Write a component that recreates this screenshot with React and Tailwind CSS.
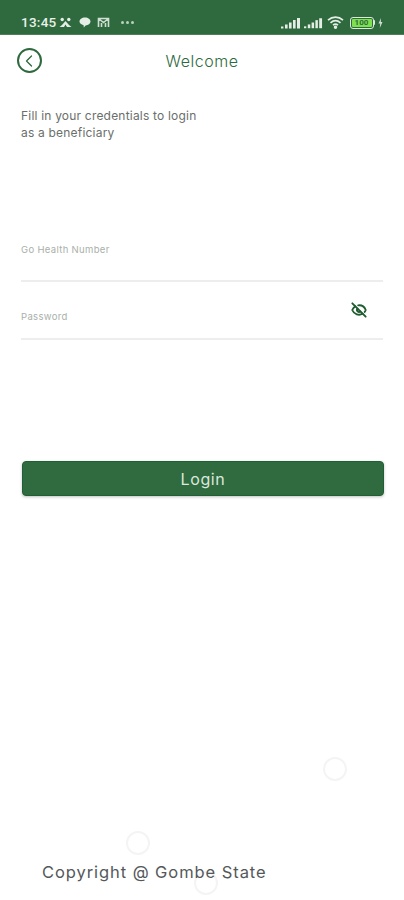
import React from 'react';
import { ChevronLeft, EyeOff } from 'lucide-react';

const font = "font-['Inter','Liberation_Sans',sans-serif]";

const SignalBars = ({ big }) => (
  <svg width={big ? 20 : 19} height="12" viewBox="0 0 20 12" fill="#e4eee6">
    <rect x="0" y="9.5" width="2.4" height="2" />
    <rect x="4" y="7.5" width="2.6" height="4" />
    <rect x="8" y="5.5" width="2.6" height="6" />
    <rect x="12" y="3" width="2.6" height="8.5" />
    <rect x="16" y="1" width="3" height="10.5" />
  </svg>
);

const Ring = ({ className }) => (
  <div className={`absolute w-6 h-6 rounded-full border-2 border-[#f3f4f3] ${className}`} />
);

const StatusBar = () => (
  <div className="h-[35px] bg-[#2f6a3e] flex items-center pl-[21px] pr-[21px] pt-[11px] shrink-0 border-b border-[#4d7f5a]">
    <span className="text-[13.5px] font-medium text-[#e8f1ea] font-['Roboto',sans-serif] tracking-[0.25px]">13:45</span>
    <svg className="ml-[2px]" width="13" height="11" viewBox="0 0 13 11" fill="#e4eee6">
      <circle cx="3.2" cy="2.5" r="1.7" />
      <circle cx="9.8" cy="2.5" r="1.7" />
      <path d="M6.5 4 L10 8 L12.5 10 L8 10 L6.5 7.5 L5 10 L0.5 10 L3 8 Z" />
    </svg>
    <svg className="ml-[7px]" width="12" height="11" viewBox="0 0 12 11" fill="#e4eee6">
      <path d="M6 0.5 C9.2 0.5 11.5 2.2 11.5 4.6 C11.5 7 9.2 8.4 6.6 8.4 L4.8 10.4 L4.6 8.2 C2.2 7.6 0.5 6.4 0.5 4.6 C0.5 2.2 2.8 0.5 6 0.5 Z" />
    </svg>
    <svg className="ml-[6px]" width="13" height="11" viewBox="0 0 13 11" fill="none" stroke="#cfdfd3" strokeWidth="1.6">
      <path d="M1.5 10 V1.5 H11.5 V10 M1.5 1.5 L6.5 5.5 L11.5 1.5 M4.5 10 V6 M8.5 10 V6" />
    </svg>
    <div className="ml-[11px] flex gap-[2px]">
      <div className="w-[3px] h-[3px] rounded-full bg-[#b9d0bf]" />
      <div className="w-[3px] h-[3px] rounded-full bg-[#b9d0bf]" />
      <div className="w-[3px] h-[3px] rounded-full bg-[#b9d0bf]" />
    </div>
    <div className="ml-auto flex items-center">
      <SignalBars big />
      <div className="ml-[3px]"><SignalBars /></div>
      <svg className="ml-[4px]" width="18" height="13" viewBox="0 0 18 13" fill="none" stroke="#e4eee6" strokeWidth="1.7">
        <path d="M1 4.2 C5.5 0.2 11.5 0.2 16 4.2" />
        <path d="M3.5 6.8 C6.8 4 10.2 4 13.5 6.8" />
        <path d="M6 9.2 C7.8 7.8 9.2 7.8 11 9.2" />
        <circle cx="8.5" cy="11.2" r="0.9" fill="#e4eee6" />
      </svg>
      <div className="ml-[5px] w-[24px] h-[12px] rounded-[3px] border border-[#dcebd9] p-[1px] flex">
        <div className="flex-1 bg-[#7ee04f] rounded-[1px] flex items-center justify-center text-[8px] leading-none font-bold text-[#2f6a3e] font-['Roboto',sans-serif]">100</div>
      </div>
      <div className="w-[1.5px] h-[5px] bg-[#dcebd9] rounded-r-sm" />
      <svg className="ml-[3px]" width="5" height="10" viewBox="0 0 5 10" fill="#cfdfd3">
        <path d="M3 0 L0.5 5.5 H2.2 L1.8 10 L4.5 4 H2.8 Z" />
      </svg>
    </div>
  </div>
);

const Field = ({ label, className, children }) => (
  <div className={`border-b-2 border-[#eceeec] flex items-start justify-between ${className}`}>
    <span className="text-[9.5px] leading-none text-[#a9b0aa] tracking-[0.33px]">{label}</span>
    {children}
  </div>
);

export default function App() {
  return (
    <div className={`relative w-[404px] h-[900px] bg-white overflow-hidden flex flex-col ${font}`}>
      <StatusBar />

      <div className="relative h-[52px] flex items-center justify-center shrink-0">
        <div className="absolute left-[17px] top-[13px] w-[25px] h-[25px] rounded-full border-2 border-[#2f6a3e] flex items-center justify-center">
          <ChevronLeft size={20} strokeWidth={1.5} className="text-[#2f6a3e] -ml-[2px]" />
        </div>
        <h1 className="text-[16px] font-light text-[#2f6a3e] tracking-[0.5px]">Welcome</h1>
      </div>

      <p className="pl-[21px] pt-[20px] text-[12px] leading-[17px] text-[#6a6f6b] tracking-[0.2px]">
        Fill in your credentials to login
        <br />
        as a beneficiary
      </p>

      <div className="px-[21px] pt-[104px] flex flex-col">
        <Field label="Go Health Number" className="h-[37px]" />
        <Field label="Password" className="h-[58px] pt-[30px]">
          <EyeOff size={16} strokeWidth={2.8} className="text-[#1f5c30] mr-[16px] -mt-[10px]" />
        </Field>
      </div>

      <button className="ml-[22px] mr-[20px] mt-[121px] h-[35px] rounded-[4px] bg-[#306b3f] border border-[#1f5f33] shadow-[0_1px_3px_rgba(0,0,0,0.25)] text-[16px] font-normal text-[#dbe8dd] tracking-[0.6px]">
        Login
      </button>

      <Ring className="left-[323px] top-[757px]" />
      <Ring className="left-[126px] top-[831px]" />
      <Ring className="left-[194px] top-[871px]" />

      <div className="relative mt-auto pb-[18px] pl-[42px] text-[16.5px] leading-[20px] text-[#55585a] tracking-[0.93px]">
        Copyright @ Gombe State
      </div>
    </div>
  );
}
